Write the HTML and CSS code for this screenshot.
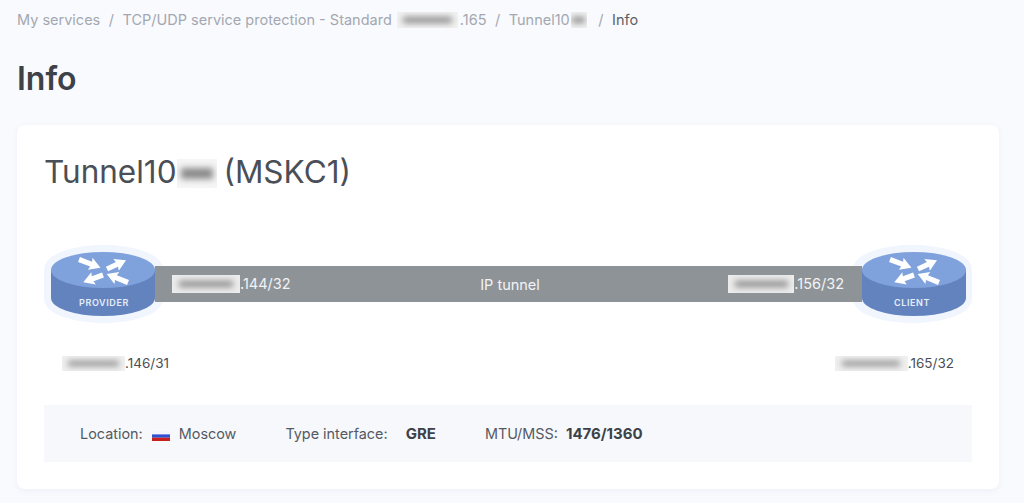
FILE: index.html
```html
<!DOCTYPE html>
<html lang="en">
<head>
<meta charset="utf-8">
<title>Info</title>
<link rel="stylesheet" href="styles.css">
</head>
<body>
<svg class="defs" width="0" height="0" aria-hidden="true">
  <defs>
    <symbol id="router-halo" viewBox="0 0 120 78">
      <path d="M7 25 A52.5 18 0 0 1 112 25 V53 A52.5 18 0 0 1 7 53 Z"/>
    </symbol>
    <symbol id="router" viewBox="0 0 120 78">
      <path class="r-side" d="M7 25 V53 A52 18 0 0 0 111 53 V25 Z"/>
      <ellipse class="r-top" cx="59" cy="25" rx="52" ry="18"/>
      <g class="r-arrow">
        <polygon transform="translate(35 14.5) rotate(21)" points="0,-2.6 13,-2.6 12,-6.5 23,0 12,6.5 13,2.6 0,2.6"/>
        <polygon transform="translate(63 24) rotate(-25)" points="0,-2.6 11,-2.6 10,-6.5 21,0 10,6.5 11,2.6 0,2.6"/>
        <polygon transform="translate(59 30) rotate(160)" points="0,-2.6 11,-2.6 10,-6.5 21,0 10,6.5 11,2.6 0,2.6"/>
        <polygon transform="translate(84 37.5) rotate(202)" points="0,-2.6 13,-2.6 12,-6.5 23,0 12,6.5 13,2.6 0,2.6"/>
      </g>
    </symbol>
  </defs>
</svg>

<nav class="crumbs">
  <span>My services</span><i>/</i>
  <span>TCP/UDP service protection - Standard <b class="blur blur-crumb"></b>.165</span><i>/</i>
  <span>Tunnel10<b class="blur blur-crumb-s"></b></span><i>/</i>
  <span class="current">Info</span>
</nav>

<h1 class="page-title">Info</h1>

<main class="card">
  <h2 class="tunnel-title">Tunnel10<b class="blur blur-title"></b> (MSKC1)</h2>

  <section class="diagram">
    <div class="router">
      <svg class="router-halo" viewBox="0 0 120 78"><use href="#router-halo"/></svg>
      <svg class="router-svg" viewBox="0 0 120 78"><use href="#router"/></svg>
      <span class="router-name">PROVIDER</span>
    </div>
    <div class="tunnel">
      <span class="t-left"><b class="blur blur-bar"></b>.144/32</span>
      <span class="t-mid">IP tunnel</span>
      <span class="t-right"><b class="blur blur-bar-r"></b>.156/32</span>
    </div>
    <div class="router router-client">
      <svg class="router-halo" viewBox="0 0 120 78"><use href="#router-halo"/></svg>
      <svg class="router-svg" viewBox="0 0 120 78"><use href="#router"/></svg>
      <span class="router-name">CLIENT</span>
    </div>
  </section>

  <div class="addresses">
    <span><b class="blur blur-addr-l"></b>.146/31</span>
    <span><b class="blur blur-addr-r"></b>.165/32</span>
  </div>

  <section class="meta">
    <span class="meta-item m-loc">Location: <svg class="flag" viewBox="0 0 18 10"><rect width="18" height="3.4" fill="#f4f5fa"/><rect y="3.4" width="18" height="3.3" fill="#2f4fd0"/><rect y="6.7" width="18" height="3.3" fill="#c8201c"/></svg> Moscow</span>
    <span class="meta-item m-type">Type interface: <strong>GRE</strong></span>
    <span class="meta-item">MTU/MSS: <strong class="mtu">1476/1360</strong></span>
  </section>
</main>
</body>
</html>
```
FILE: styles.css
```css
* { box-sizing: border-box; }
html, body { height: 503px; overflow: hidden; }
body {
  margin: 0;
  padding: 0 25px 0 17px;
  background: #f9fafe;
  font-family: Inter, "Liberation Sans", sans-serif;
  color: #4a4f57;
}
.defs { position: absolute; }
.crumbs {
  display: flex;
  align-items: center;
  height: 17px;
  margin-top: 11px;
  font-size: 14.5px;
  color: #a3a8b0;
  white-space: pre;
}
.crumbs i { font-style: normal; margin: 0 8.5px; }
.crumbs .current { color: #5c6168; }
.page-title {
  margin: 27px 0 0;
  font-size: 32px;
  line-height: 48px;
  font-weight: 600;
  color: #3d4249;
}
.card {
  margin-top: 22px;
  height: 364px;
  padding: 27px 27px 0;
  background: #fff;
  border-radius: 8px;
  box-shadow: 0 2px 6px rgba(60, 80, 120, .06);
}
.tunnel-title {
  margin: 0;
  font-size: 31.5px;
  line-height: 40px;
  font-weight: 400;
  color: #4a4f57;
}
.blur {
  display: inline-block;
  position: relative;
  vertical-align: -4px;
  background: #ececec;
  overflow: hidden;
}
.blur::after {
  content: "";
  position: absolute;
  inset: 32% 10%;
  background: #8a8a8a;
  filter: blur(3px);
}
.blur-crumb { width: 61px; height: 16px; margin: 0 2px 0 1px; background: #f1f1f1; vertical-align: -3px; }
.blur-crumb-s { width: 16px; height: 16px; margin: 0 3px 0 1px; background: #f1f1f1; vertical-align: -3px; }
.blur-title { width: 40px; height: 29px; margin-right: -2px; background: #f5f5f5; vertical-align: -5px; }
.blur-bar { width: 68px; height: 18px; }
.blur-bar-r { width: 66px; height: 18px; }
.blur-addr-l { width: 63px; height: 15px; background: #f0f0f0; vertical-align: -3px; }
.blur-addr-r { width: 73px; height: 15px; background: #f0f0f0; vertical-align: -3px; }
.diagram {
  display: flex;
  align-items: center;
  height: 78px;
  margin-top: 53px;
  isolation: isolate;
}
.router {
  position: relative;
  flex: none;
  width: 120px;
  height: 78px;
}
.router-halo {
  position: absolute;
  left: 0;
  top: 0;
  z-index: -1;
  width: 120px;
  height: 78px;
  overflow: visible;
  fill: #f1f5fd;
  stroke: #f1f5fd;
  stroke-width: 14;
  stroke-linejoin: round;
}
.router-svg {
  position: relative;
  z-index: 1;
  display: block;
  width: 120px;
  height: 78px;
}
.router-client .router-svg { left: 2.5px; }
.router-client .router-halo { left: 1px; }
.r-side { fill: #6283bd; }
.r-top { fill: #7fa1dc; }
.r-arrow { fill: #fff; }
.router-name {
  position: absolute;
  z-index: 2;
  left: 0;
  right: 0;
  top: 52px;
  text-align: center;
  font-size: 9px;
  line-height: 11px;
  font-weight: 600;
  letter-spacing: .6px;
  color: #e6edf9;
}
.tunnel {
  flex: 1;
  display: grid;
  grid-template-columns: 1fr auto 1fr;
  align-items: center;
  height: 36px;
  margin: 0 -10px 0 -9px;
  padding: 0 18px 0 17px;
  background: #8e9398;
  font-size: 14.5px;
  color: #f2f3f5;
}
.t-mid { padding-left: 4px; }
.t-right { text-align: right; }
.addresses {
  display: flex;
  justify-content: space-between;
  margin-top: 30px;
  padding: 0 18px;
  font-size: 13.5px;
  line-height: 20px;
  color: #4a4f57;
}
.meta {
  display: flex;
  align-items: center;
  height: 57px;
  margin-top: 32px;
  padding-left: 36px;
  background: #f6f8fc;
  font-size: 14.4px;
  color: #555a62;
}
.meta-item { white-space: pre; }
.m-loc { margin-right: 49px; }
.m-type { margin-right: 49px; }
.meta strong { font-size: 15px; font-weight: 700; color: #3d4249; margin-left: 14px; }
.meta strong.mtu { margin-left: 4px; }
.flag { width: 18px; height: 10px; margin: 0 5px; vertical-align: -2px; }
```
